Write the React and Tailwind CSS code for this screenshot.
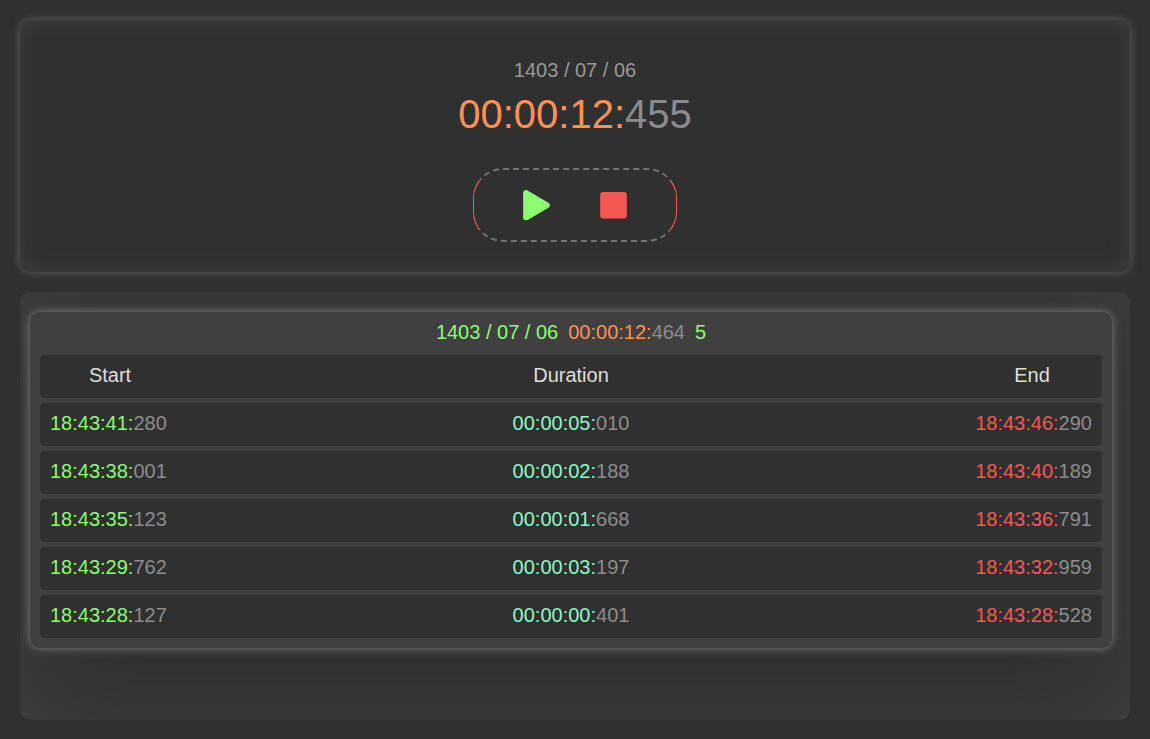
import { FaPlay, FaStop } from "react-icons/fa";

const rows = [
  ["18:43:41:", "280", "00:00:05:", "010", "18:43:46:", "290"],
  ["18:43:38:", "001", "00:00:02:", "188", "18:43:40:", "189"],
  ["18:43:35:", "123", "00:00:01:", "668", "18:43:36:", "791"],
  ["18:43:29:", "762", "00:00:03:", "197", "18:43:32:", "959"],
  ["18:43:28:", "127", "00:00:00:", "401", "18:43:28:", "528"],
];

function Time({ main, ms, color }) {
  return (
    <span className={color}>
      {main}
      <span className="text-[#8c8c8c]">{ms}</span>
    </span>
  );
}

function Row({ children }) {
  return (
    <div className="flex h-[43px] justify-between rounded-[5px] bg-[#303030] px-2.5 pt-[9px]">
      {children}
    </div>
  );
}

export default function App() {
  return (
    <div className="flex h-[739px] flex-col gap-5 bg-[#303030] p-5 pb-[19px] font-['Liberation_Sans',Arial,sans-serif] text-[20px] leading-[23px] text-[#deded6]">
      <section className="flex h-[252px] shrink-0 flex-col items-center rounded-[10px] pt-[39px] shadow-[0_0_10px_#606060,inset_0_0_20px_#404040]">
        <div className="text-[#989898]">1403 / 07 / 06</div>
        <div className="mt-[9px] text-[40px] leading-[46px]">
          <Time main="00:00:12:" ms="455" color="text-[#ff9058]" />
        </div>
        <div className="mt-[31px] flex h-[74px] w-[204px] items-center justify-center gap-[49.5px] rounded-[30px] border-x border-y-2 border-x-[#f55753] border-y-[#747474] pb-[0.5px] [border-style:dashed_solid] text-[30px]">
          <button aria-label="Start"><FaPlay className="h-[30.5px] w-[27px] text-[#8aff70]" /></button>
          <button aria-label="Stop"><FaStop className="h-[30.5px] w-[27px] text-[#f55753]" /></button>
        </div>
      </section>
      <section className="flex-1 rounded-[10px] pt-5 pr-[18px] pl-2.5 shadow-[inset_0_0_100px_#404040]">
        <div className="flex h-[336px] flex-col gap-[5px] rounded-[10px] bg-[#404040] p-2.5 pt-[9px] shadow-[0_0_10px_#808080]">
          <div className="mb-1.5 flex h-[23px] shrink-0 justify-center gap-2.5 text-[#8aff70]">
            <span>1403 / 07 / 06</span>
            <Time main="00:00:12:" ms="464" color="text-[#ff9058]" />
            <span>5</span>
          </div>
          <Row>
            <span className="w-[120px] text-center">Start</span>
            <span>Duration</span>
            <span className="w-[120px] text-center">End</span>
          </Row>
          {rows.map((r) => (
            <Row key={r[0]}>
              <Time main={r[0]} ms={r[1]} color="text-[#8aff70]" />
              <Time main={r[2]} ms={r[3]} color="text-[#8af8c8]" />
              <Time main={r[4]} ms={r[5]} color="text-[#f55753]" />
            </Row>
          ))}
        </div>
      </section>
    </div>
  );
}
